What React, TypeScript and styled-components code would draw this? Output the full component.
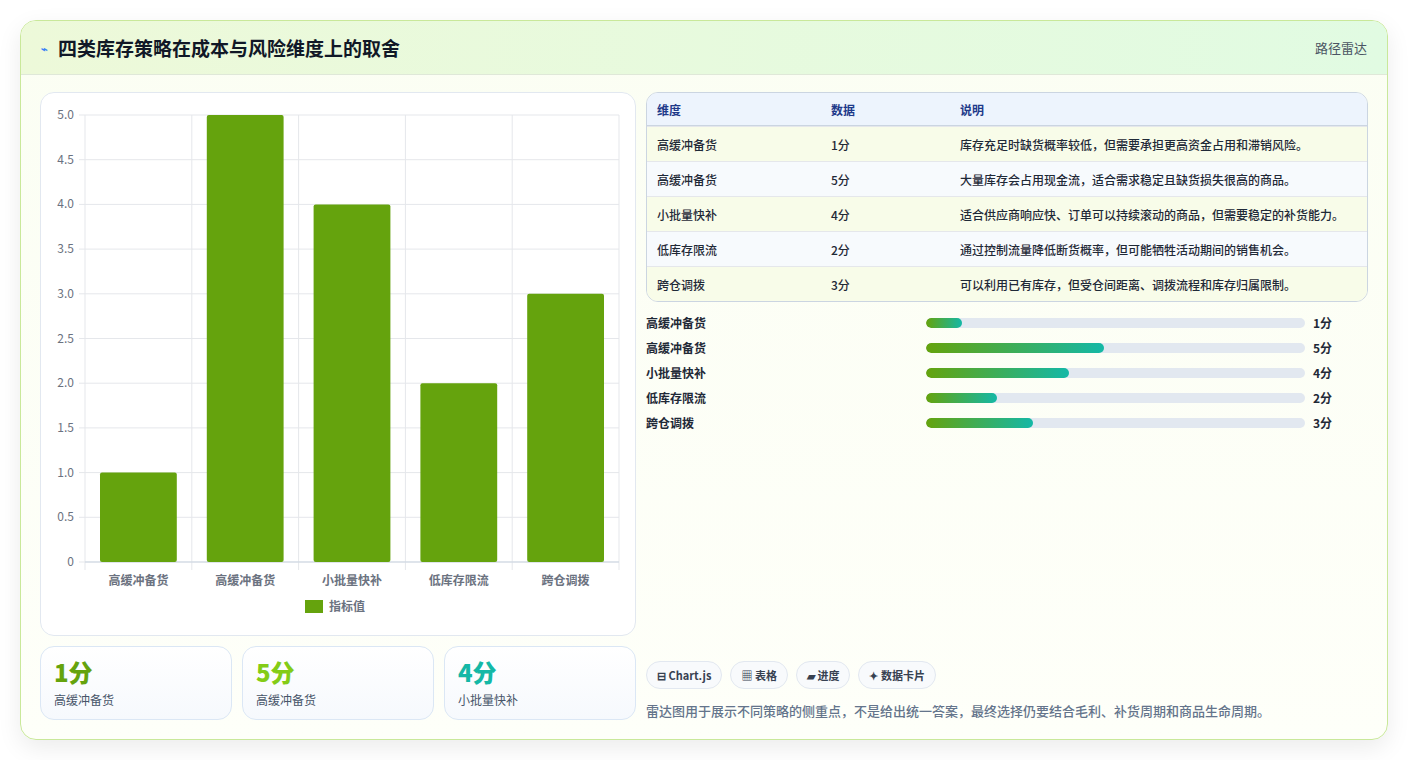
import React from "react";
import styled, { createGlobalStyle } from "styled-components";

const G = createGlobalStyle`
  html,body{margin:0;padding:0;background:#f3f4f6;}
  body{font-family:"Noto Sans CJK SC","Noto Sans",sans-serif;}
  *{box-sizing:border-box;}
`;
const Page = styled.div`padding:20px 20px 20px 20px;background:#fff;height:760px;`;
const Card = styled.div`
  width:1368px;height:720px;border:1px solid #c9e89a;border-radius:16px;overflow:hidden;
  background:linear-gradient(180deg,#fbfef3,#fefff9);box-shadow:0 8px 24px rgba(0,0,0,.08);
  display:flex;flex-direction:column;`;
const Header = styled.div`
  height:55px;display:flex;align-items:center;justify-content:space-between;padding:0 20px;
  background:linear-gradient(90deg,#edf9d9,#e1fbe2);border-bottom:1px solid #dfe8d8;`;
const Title = styled.h1`margin:0;font-size:19px;font-weight:700;color:#111827;display:flex;align-items:center;gap:10px;`;
const Icon = styled.span`font-size:11px;color:#3b82f6;`;
const Meta = styled.span`font-size:13px;color:#4b5563;`;
const Body = styled.div`flex:1;display:grid;grid-template-columns:596px 1fr;gap:10px;padding:17px 19px 19px 19px;`;
const Left = styled.div`display:flex;flex-direction:column;gap:10px;`;
const ChartBox = styled.div`height:544px;background:#fff;border:1px solid #e2e8f0;border-radius:14px;position:relative;`;
const Stats = styled.div`display:grid;grid-template-columns:repeat(3,1fr);gap:10px;`;
const Stat = styled.div`height:74px;border:1px solid #dbe7f5;border-radius:14px;background:linear-gradient(180deg,#fff,#f6f9fd);padding:10px 13px;`;
const StatVal = styled.div<{c:string}>`font-size:24px;font-weight:800;color:${p=>p.c};line-height:30px;`;
const StatLab = styled.div`font-size:12px;color:#475569;margin-top:4px;`;
const Right = styled.div`display:flex;flex-direction:column;`;
const Table = styled.table`width:100%;border-collapse:separate;border-spacing:0;border:1px solid #cbd5e1;border-radius:12px;overflow:hidden;font-size:12px;`;
const Th = styled.th`text-align:left;font-weight:700;color:#1e3a8a;background:#edf4fd;height:33px;padding:0 10px;border-bottom:1px solid #cbd5e1;`;
const Td = styled.td<{odd:boolean}>`height:35px;padding:0 10px;color:#1f2937;font-weight:500;background:${p=>p.odd?"#f8fce9":"#f7fafd"};border-top:1px solid #e5e7eb;`;
const Bars = styled.div`display:flex;flex-direction:column;gap:9px;margin-top:12px;`;
const BarRow = styled.div`display:grid;grid-template-columns:272px 379px 1fr;align-items:center;column-gap:8px;height:16px;font-size:12px;font-weight:600;color:#1f2937;`;
const Track = styled.div`height:10px;border-radius:5px;background:#e2e8f0;overflow:hidden;`;
const Fill = styled.div`height:100%;border-radius:5px;background:linear-gradient(90deg,#65a30d,#14b8a6);`;
const Tags = styled.div`margin-top:auto;display:flex;gap:8px;`;
const Tag = styled.span`height:28px;padding:0 10px;border:1px solid #e2e8f0;border-radius:14px;background:#f8fafc;font-size:11px;font-weight:700;color:#374151;display:flex;align-items:center;gap:3px;`;
const Note = styled.p`margin:12px 0 0;font-size:13px;color:#64748b;font-weight:500;`;

const names=["高缓冲备货","高缓冲备货","小批量快补","低库存限流","跨仓调拨"];
const vals=[1,5,4,2,3];
const desc=["库存充足时缺货概率较低，但需要承担更高资金占用和滞销风险。","大量库存会占用现金流，适合需求稳定且缺货损失很高的商品。","适合供应商响应快、订单可以持续滚动的商品，但需要稳定的补货能力。","通过控制流量降低断货概率，但可能牺牲活动期间的销售机会。","可以利用已有库存，但受仓间距离、调拨流程和库存归属限制。"];

function Chart(){
  const x0=44,x1=578,y0=22,y1=469,w=(x1-x0)/5,h=y1-y0;
  const ticks=[0,0.5,1,1.5,2,2.5,3,3.5,4,4.5,5];
  return <svg width="594" height="542" style={{display:"block"}} fontFamily="Noto Sans CJK SC, sans-serif">
    {ticks.map(t=>{const y=y1-t/5*h;return <g key={t}><line x1={x0-6} x2={x1} y1={y} y2={y} stroke="#e5e7eb"/><text x={x0-11} y={y+4} fontSize="12" fill="#6b7280" textAnchor="end">{t===0?"0":t.toFixed(1)}</text></g>})}
    {[0,1,2,3,4,5].map(i=><line key={i} x1={x0+i*w} x2={x0+i*w} y1={y0} y2={y1+8} stroke="#e5e7eb"/>)}
    <line x1={x0} x2={x1} y1={y1} y2={y1} stroke="#cbd5e1"/>
    {vals.map((v,i)=><g key={i}><rect x={x0+i*w+15} y={y1-v/5*h} width={w-30} height={v/5*h} rx="2" fill="#65a30d"/>
      <text x={x0+i*w+w/2} y={y1+23} fontSize="12" fill="#6b7280" textAnchor="middle" fontWeight="600">{names[i]}</text></g>)}
    <rect x="264" y="507" width="18" height="13" fill="#65a30d"/>
    <text x="288" y="518" fontSize="12" fill="#6b7280" fontWeight="600">指标值</text>
  </svg>;
}

export default function App(){
  return <><G/><Page><Card>
    <Header><Title><Icon>⌁</Icon>四类库存策略在成本与风险维度上的取舍</Title><Meta>路径雷达</Meta></Header>
    <Body>
      <Left>
        <ChartBox><Chart/></ChartBox>
        <Stats>
          <Stat><StatVal c="#65a30d">1分</StatVal><StatLab>高缓冲备货</StatLab></Stat>
          <Stat><StatVal c="#84cc16">5分</StatVal><StatLab>高缓冲备货</StatLab></Stat>
          <Stat><StatVal c="#14b8a6">4分</StatVal><StatLab>小批量快补</StatLab></Stat>
        </Stats>
      </Left>
      <Right>
        <Table>
          <thead><tr><Th style={{width:174}}>维度</Th><Th style={{width:129}}>数据</Th><Th>说明</Th></tr></thead>
          <tbody>{names.map((n,i)=><tr key={i}><Td odd={i%2===0}>{n}</Td><Td odd={i%2===0}>{vals[i]}分</Td><Td odd={i%2===0}>{desc[i]}</Td></tr>)}</tbody>
        </Table>
        <Bars>{names.map((n,i)=><BarRow key={i}><span>{n}</span><Track><Fill style={{width:`${vals[i]*9.4}%`}}/></Track><span>{vals[i]}分</span></BarRow>)}</Bars>
        <Tags><Tag>⊟ Chart.js</Tag><Tag>▦ 表格</Tag><Tag>▰ 进度</Tag><Tag>✦ 数据卡片</Tag></Tags>
        <Note>雷达图用于展示不同策略的侧重点，不是给出统一答案，最终选择仍要结合毛利、补货周期和商品生命周期。</Note>
      </Right>
    </Body>
  </Card></Page></>;
}
